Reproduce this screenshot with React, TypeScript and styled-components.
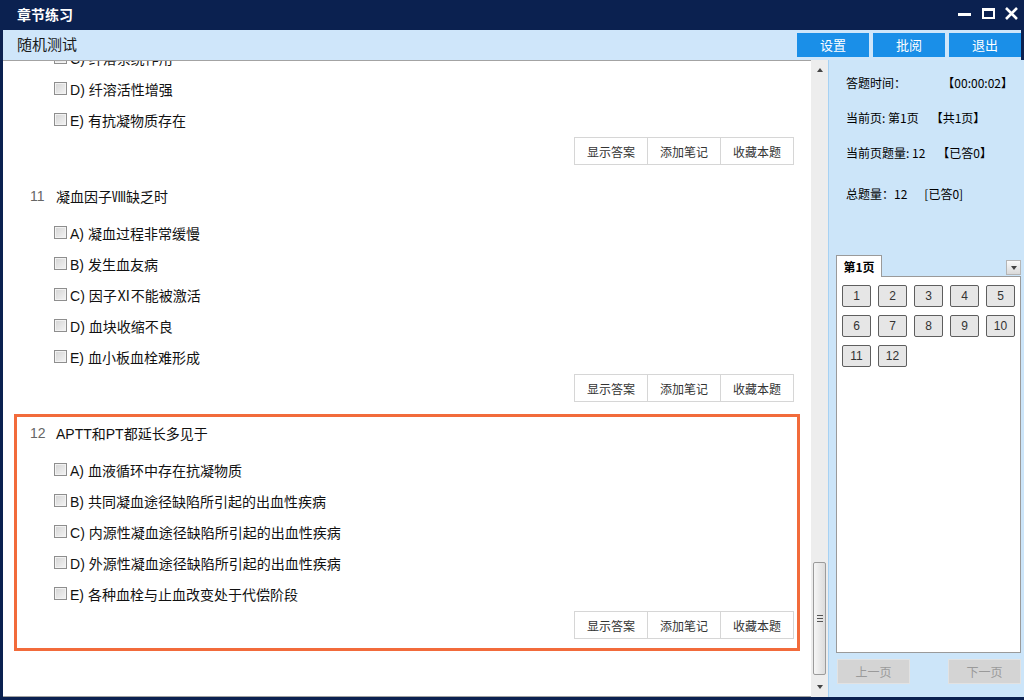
import { useLayoutEffect, useRef } from 'react';
import styled, { createGlobalStyle } from 'styled-components';

const GlobalStyle = createGlobalStyle`
  html, body {
    margin: 0;
    padding: 0;
  }
  body {
    font-family: "Liberation Sans", "Noto Sans CJK SC", sans-serif;
    background: #0b2150;
  }
  * {
    box-sizing: border-box;
  }
`;

const Window = styled.div`
  width: 1024px;
  height: 700px;
  display: flex;
  flex-direction: column;
  background: #0b2150;
  padding: 0 3px 3px;
  overflow: hidden;
`;

const TitleBar = styled.div`
  height: 30px;
  flex-shrink: 0;
  display: flex;
  align-items: center;
  justify-content: space-between;
  padding-left: 14px;
  color: #fff;
  font-size: 14px;
  font-weight: bold;
  line-height: 18px;
  font-family: "Noto Sans CJK SC", sans-serif;
`;

const TitleText = styled.span`
  padding-bottom: 3px;
`;

const Toolbar = styled.div`
  height: 30px;
  flex-shrink: 0;
  display: flex;
  align-items: center;
  padding-left: 14px;
  background: #cfe6fa;
`;

const ToolbarTitle = styled.div`
  flex: 1;
  font-size: 15px;
  line-height: 20px;
  padding-bottom: 3px;
  color: #1a1a1a;
  font-family: "Noto Sans CJK SC", sans-serif;
`;

const ToolButtons = styled.div`
  display: flex;
  gap: 4px;
  padding-bottom: 1px;
`;

const ToolButton = styled.button`
  width: 72px;
  height: 24px;
  border: none;
  background: #1a8fe8;
  color: #fff;
  font-size: 13px;
  font-family: "Noto Sans CJK SC", sans-serif;
  padding: 0;
  cursor: pointer;
`;

const Body = styled.div`
  flex: 1;
  min-height: 0;
  display: flex;
`;

const Content = styled.div`
  width: 808px;
  flex-shrink: 0;
  background: #fff;
  border-top: 1px solid #a3a3a3;
  border-bottom: 1px solid #a3a3a3;
  overflow-y: auto;
  scrollbar-width: none;

  &::-webkit-scrollbar {
    display: none;
  }
`;

const QuestionList = styled.div`
  padding-bottom: 45px;
`;

const QuestionBlock = styled.div<{ $active?: boolean }>`
  margin: 0 11px;
  border: 3px solid ${({ $active }) => ($active ? '#f26b3b' : 'transparent')};
  padding: 5px 3px 9px 0;
`;

const QuestionTitle = styled.div`
  height: 22px;
  display: flex;
  align-items: center;
  padding-left: 13px;
  font-size: 14px;
  color: #111;
`;

const QuestionNo = styled.span`
  width: 26px;
  color: #666;
`;

const Options = styled.div`
  margin-top: 10px;
  padding-left: 37px;
`;

const OptionRow = styled.label`
  height: 31px;
  display: flex;
  align-items: center;
  font-size: 14px;
  color: #111;
`;

const CheckBox = styled.span`
  width: 13px;
  height: 13px;
  margin-right: 3px;
  border: 1px solid #8e8e8e;
  background: linear-gradient(135deg, #d4d4d4, #f4f4f4);
  box-shadow: inset 0 0 0 1px #f2f2f2;
`;

const ActionRow = styled.div`
  margin-top: 2px;
  display: flex;
  justify-content: flex-end;
`;

const ActionButton = styled.button`
  width: 74px;
  height: 28px;
  padding: 0;
  border: 1px solid #d6d6d6;
  background: #fff;
  color: #333;
  font-size: 12px;
  font-family: "Noto Sans CJK SC", sans-serif;
  cursor: pointer;

  & + & {
    margin-left: -1px;
  }
`;

const ScrollBar = styled.div`
  width: 17px;
  flex-shrink: 0;
  display: flex;
  flex-direction: column;
  background: #ededed;
`;

const ScrollArrow = styled.div`
  height: 20px;
  display: flex;
  align-items: center;
  justify-content: center;
`;

const Triangle = styled.span<{ $down?: boolean }>`
  width: 0;
  height: 0;
  border-left: 3.5px solid transparent;
  border-right: 3.5px solid transparent;
  ${({ $down }) => ($down ? 'border-top: 4px solid #444;' : 'border-bottom: 4px solid #444;')}
`;

const ScrollTrack = styled.div`
  flex: 1;
  display: flex;
  flex-direction: column;
  justify-content: flex-end;
  padding: 0 2px 2px;
`;

const ScrollThumb = styled.div`
  height: 113px;
  border: 1px solid #9b9b9b;
  border-radius: 2px;
  background: linear-gradient(to right, #f6f6f6, #dcdcdc);
  display: flex;
  align-items: center;
  justify-content: center;
`;

const Grip = styled.span`
  width: 6px;
  height: 7px;
  background: repeating-linear-gradient(to bottom, #555 0 1px, transparent 1px 3px);
`;

const SidePanel = styled.div`
  flex: 1;
  display: flex;
  flex-direction: column;
  background: #cce5f9;
  border-left: 1px solid #a6d1f3;
  padding: 0 4px 13px 7px;
  font-family: "Noto Sans CJK SC", sans-serif;
`;

const Stats = styled.div`
  padding: 5px 0 0 10px;
`;

const StatRow = styled.div<{ $spread?: boolean; $extra?: number }>`
  height: 35px;
  margin-top: ${({ $extra }) => $extra ?? 0}px;
  display: flex;
  align-items: center;
  justify-content: ${({ $spread }) => ($spread ? 'space-between' : 'flex-start')};
  padding-right: 8px;
  font-size: 12px;
  color: #000;
`;

const StatValue = styled.span<{ $gap?: number }>`
  margin-left: ${({ $gap }) => $gap ?? 0}px;
`;

const TabHeader = styled.div`
  margin-top: 44px;
  margin-bottom: -1px;
  display: flex;
  align-items: flex-end;
  justify-content: space-between;
`;

const Tab = styled.div`
  position: relative;
  z-index: 1;
  width: 46px;
  height: 22px;
  display: flex;
  align-items: center;
  justify-content: center;
  background: #fff;
  border: 1px solid #9a9a9a;
  border-bottom: none;
  font-size: 12px;
  font-weight: bold;
  color: #000;
`;

const DropButton = styled.div`
  width: 15px;
  height: 15px;
  margin-bottom: 2px;
  display: flex;
  align-items: center;
  justify-content: center;
  border: 1px solid #b5b5b5;
  background: linear-gradient(#fafafa, #dadada);
`;

const TabBox = styled.div`
  flex: 1;
  background: #fff;
  border: 1px solid #9a9a9a;
  padding: 8px 5px;
`;

const NumGrid = styled.div`
  display: grid;
  grid-template-columns: repeat(5, 29px);
  grid-auto-rows: 22px;
  column-gap: 7px;
  row-gap: 8px;
`;

const NumButton = styled.button`
  padding: 0;
  border: 1px solid #5e5e5e;
  border-radius: 2px;
  background: #e6e6e6;
  color: #333;
  font-size: 12px;
  font-family: "Liberation Sans", sans-serif;
  cursor: pointer;
`;

const NavRow = styled.div`
  margin-top: 6px;
  display: flex;
  justify-content: space-between;
  padding-left: 1px;
`;

const NavButton = styled.button`
  width: 73px;
  height: 25px;
  padding: 0;
  border: 1px solid #e2e2e2;
  background: #d4d4d4;
  color: #9a9a9a;
  font-size: 12px;
  font-family: "Noto Sans CJK SC", sans-serif;
`;

const WindowControls = () => (
  <svg width="66" height="22" viewBox="0 0 66 22">
    <rect x="3" y="9" width="13" height="3" fill="#fff" />
    <rect x="28" y="5" width="11" height="9" fill="none" stroke="#fff" strokeWidth="2" />
    <rect x="27" y="4" width="13" height="3" fill="#fff" />
    <path d="M51 4 L62 15 M62 4 L51 15" stroke="#fff" strokeWidth="2.6" />
  </svg>
);

interface Question {
  no: number;
  title: string;
  options: string[];
  active?: boolean;
}

const questions: Question[] = [
  {
    no: 10,
    title: '原发性纤溶亢进时可见',
    options: ['纤维蛋白原减少', 'FDP增多', '纤溶系统作用', '纤溶活性增强', '有抗凝物质存在'],
  },
  {
    no: 11,
    title: '凝血因子Ⅷ缺乏时',
    options: ['凝血过程非常缓慢', '发生血友病', '因子Ⅺ不能被激活', '血块收缩不良', '血小板血栓难形成'],
  },
  {
    no: 12,
    title: 'APTT和PT都延长多见于',
    options: [
      '血液循环中存在抗凝物质',
      '共同凝血途径缺陷所引起的出血性疾病',
      '内源性凝血途径缺陷所引起的出血性疾病',
      '外源性凝血途径缺陷所引起的出血性疾病',
      '各种血栓与止血改变处于代偿阶段',
    ],
    active: true,
  },
];

const letters = ['A', 'B', 'C', 'D', 'E'];

const App = () => {
  const contentRef = useRef<HTMLDivElement>(null);

  useLayoutEffect(() => {
    const el = contentRef.current;
    if (el) el.scrollTop = el.scrollHeight;
  }, []);

  return (
    <>
      <GlobalStyle />
      <Window>
        <TitleBar>
          <TitleText>章节练习</TitleText>
          <WindowControls />
        </TitleBar>
        <Toolbar>
          <ToolbarTitle>随机测试</ToolbarTitle>
          <ToolButtons>
            <ToolButton>设置</ToolButton>
            <ToolButton>批阅</ToolButton>
            <ToolButton>退出</ToolButton>
          </ToolButtons>
        </Toolbar>
        <Body>
          <Content ref={contentRef}>
            <QuestionList>
              {questions.map((q) => (
                <QuestionBlock key={q.no} $active={q.active}>
                  <QuestionTitle>
                    <QuestionNo>{q.no}</QuestionNo>
                    {q.title}
                  </QuestionTitle>
                  <Options>
                    {q.options.map((opt, i) => (
                      <OptionRow key={i}>
                        <CheckBox />
                        {letters[i]})&nbsp;{opt}
                      </OptionRow>
                    ))}
                  </Options>
                  <ActionRow>
                    <ActionButton>显示答案</ActionButton>
                    <ActionButton>添加笔记</ActionButton>
                    <ActionButton>收藏本题</ActionButton>
                  </ActionRow>
                </QuestionBlock>
              ))}
            </QuestionList>
          </Content>
          <ScrollBar>
            <ScrollArrow>
              <Triangle />
            </ScrollArrow>
            <ScrollTrack>
              <ScrollThumb>
                <Grip />
              </ScrollThumb>
            </ScrollTrack>
            <ScrollArrow>
              <Triangle $down />
            </ScrollArrow>
          </ScrollBar>
          <SidePanel>
            <Stats>
              <StatRow $spread>
                <span>答题时间：</span>
                <span>【00:00:02】</span>
              </StatRow>
              <StatRow>
                <span>当前页: 第1页</span>
                <StatValue $gap={12}>【共1页】</StatValue>
              </StatRow>
              <StatRow>
                <span>当前页题量: 12</span>
                <StatValue $gap={12}>【已答0】</StatValue>
              </StatRow>
              <StatRow $extra={6}>
                <span>总题量：12</span>
                <StatValue $gap={17}>[已答0]</StatValue>
              </StatRow>
            </Stats>
            <TabHeader>
              <Tab>第1页</Tab>
              <DropButton>
                <Triangle $down />
              </DropButton>
            </TabHeader>
            <TabBox>
              <NumGrid>
                {Array.from({ length: 12 }, (_, i) => (
                  <NumButton key={i}>{i + 1}</NumButton>
                ))}
              </NumGrid>
            </TabBox>
            <NavRow>
              <NavButton disabled>上一页</NavButton>
              <NavButton disabled>下一页</NavButton>
            </NavRow>
          </SidePanel>
        </Body>
      </Window>
    </>
  );
};

export default App;
